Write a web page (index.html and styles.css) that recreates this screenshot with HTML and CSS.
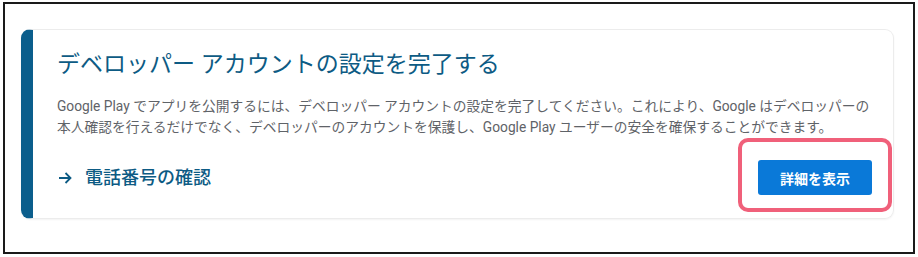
FILE: index.html
```html
<!DOCTYPE html>
<html lang="ja">
<head>
<meta charset="utf-8">
<title>デベロッパー アカウントの設定</title>
<link rel="stylesheet" href="styles.css">
</head>
<body>
<div class="frame">
  <section class="card">
    <h1 class="title">デベロッパー アカウントの設定を完了する</h1>
    <p class="desc">Google Play でアプリを公開するには、デベロッパー アカウントの設定を完了してください。これにより、Google はデベロッパーの<br>本人確認を行えるだけでなく、デベロッパーのアカウントを保護し、Google Play ユーザーの安全を確保することができます。</p>
    <div class="row">
      <a class="step">
        <svg class="arrow" width="14" height="12" viewBox="0 0 14 12"><path d="M1 6H12.5M7.5 1L12.5 6L7.5 11" fill="none" stroke="currentColor" stroke-width="1.8"/></svg>
        <span>電話番号の確認</span>
      </a>
      <div class="highlight">
        <button class="btn">詳細を表示</button>
      </div>
    </div>
  </section>
</div>
</body>
</html>
```
FILE: styles.css
```css
* { box-sizing: border-box; }
html, body { margin: 0; padding: 0; background: #fff; }
body { font-family: Roboto, "Noto Sans CJK JP", sans-serif; }
.frame {
  margin: 2px 3px;
  width: 912px;
  height: 252px;
  border: 2px solid #1a1a1a;
  padding: 25px 19px 0 16px;
  background: #fff;
}
.card {
  height: 190px;
  border: 1px solid #ececec;
  border-left: 12px solid #0b5e8c;
  border-radius: 9px;
  box-shadow: 0 1px 2px rgba(0,0,0,0.05);
  padding: 19px 21px 0 24px;
}
.title {
  margin: 0;
  font-size: 23px;
  line-height: 32px;
  font-weight: 400;
  color: #0d5b84;
}
.desc {
  margin: 15px 0 0;
  font-size: 13.75px;
  line-height: 21px;
  color: #5f6368;
}
.row {
  margin-top: 22px;
  display: flex;
  align-items: center;
  justify-content: space-between;
}
.step {
  display: flex;
  align-items: center;
  gap: 13px;
  margin-left: 1px;
  color: #0d5b84;
  font-size: 18px;
  font-weight: 500;
  line-height: 24px;
}
.arrow { display: block; }
.highlight { position: relative; }
.highlight::after {
  content: "";
  position: absolute;
  top: -22px; bottom: -17px; left: -20px; right: -20px;
  border: 4px solid #f0607a;
  border-radius: 10px;
  pointer-events: none;
}
.btn {
  display: block;
  width: 114px;
  height: 35px;
  border: 0;
  border-radius: 3px;
  background: #0a79d8;
  color: #fff;
  font-family: Roboto, "Noto Sans CJK JP", sans-serif;
  font-size: 14px;
  font-weight: 700;
  padding: 0;
}
```
